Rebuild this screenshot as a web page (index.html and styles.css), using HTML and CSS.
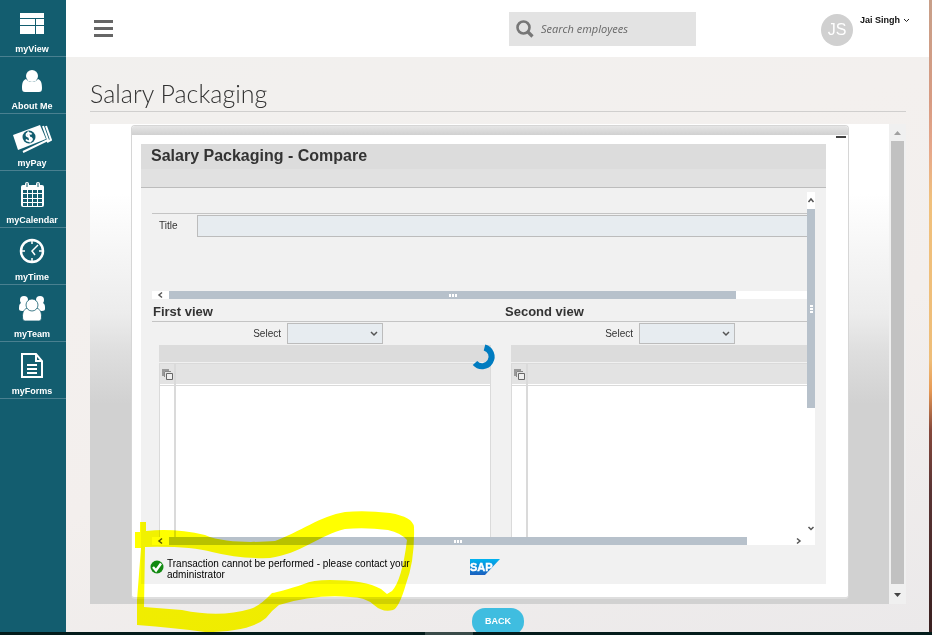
FILE: index.html
```html
<!DOCTYPE html>
<html lang="en">
<head>
<meta charset="utf-8">
<title>Salary Packaging</title>
<link rel="stylesheet" href="styles.css">
</head>
<body>
<div class="app">
  <nav class="sidebar" aria-label="Main">
    <a class="nav-item" href="#"><svg viewBox="0 0 40 32"><path fill="#fff" d="M8 6h24v5H8zM8 12h15v6H8zM24 12h8v6h-8zM8 19h15v8H8zM24 19h8v8h-8z"/></svg><span>myView</span></a>
    <a class="nav-item" href="#"><svg viewBox="0 0 40 32"><circle cx="20" cy="12" r="6" fill="#fff"/><path fill="#fff" d="M14 15c-3 1-4 4-4 9 0 3 1 4 3 4h14c2 0 3-1 3-4 0-5-1-8-4-9-3 4-9 4-12 0z"/></svg><span>About Me</span></a>
    <a class="nav-item" href="#"><svg viewBox="0 0 40 32"><path fill="#fff" d="M1 14l27-10 6 14L6 29z"/><circle cx="17" cy="16" r="6.500" fill="#135d6f"/><path fill="none" stroke="#fff" stroke-width="1.800" d="M19.500 13.500c-1-2-5-1.500-5 .5 0 2.500 5 1.500 5.500 4 0 2.500-4.500 3-6 .5M16 10.500l2.500 11"/><path fill="none" stroke="#fff" stroke-width="2" d="M31 5l5 14-25 12"/><path fill="none" stroke="#fff" stroke-width="2" d="M34 5l5 14-4 2"/></svg><span>myPay</span></a>
    <a class="nav-item" href="#"><svg viewBox="0 0 40 32"><rect x="9" y="7" width="23" height="22" rx="2" fill="#fff"/><path fill="none" stroke="#fff" stroke-width="4" stroke-linecap="round" d="M15 6v4M26 6v4"/><path stroke="#135d6f" d="M15 5v4M26 5v4"/><path fill="#135d6f" d="M11 12h4v3h-4zM16 12h4v3h-4zM21 12h4v3h-4zM26 12h4v3h-4zM11 16h4v4h-4zM16 16h4v4h-4zM21 16h4v4h-4zM26 16h4v4h-4zM11 21h4v3h-4zM16 21h4v3h-4zM21 21h4v3h-4zM26 21h4v3h-4zM11 25h4v3h-4zM16 25h4v3h-4zM21 25h4v3h-4zM26 25h4v3h-4z"/></svg><span>myCalendar</span></a>
    <a class="nav-item" href="#"><svg viewBox="0 0 40 32"><circle cx="20" cy="16" r="11" fill="none" stroke="#fff" stroke-width="2.500"/><path fill="none" stroke="#fff" stroke-width="1.500" d="M20 6v3M20 23v3M10 16h3M27 16h3M26 10l-6 6 3 4"/></svg><span>myTime</span></a>
    <a class="nav-item" href="#"><svg viewBox="0 0 40 32"><g fill="#fff"><circle cx="12" cy="8" r="4"/><circle cx="28" cy="8" r="4"/><path d="M9 11c-2 1-2 3-2 6 0 1 1 2 3 2h20c2 0 3-1 3-2 0-3 0-5-2-6z"/></g><g fill="#fff" stroke="#135d6f" stroke-width=".8"><path d="M15 16c-4 2-4.500 5-4.500 9 0 3 1 4 3 4h13c2 0 3-1 3-4 0-4-.5-7-4.500-9z"/><circle cx="20" cy="13" r="6"/></g></svg><span>myTeam</span></a>
    <a class="nav-item" href="#"><svg viewBox="0 0 40 32"><path fill="none" stroke="#fff" stroke-width="2" d="M10 5h14l6 7v16H10zM24 5v7h6"/><path stroke="#fff" stroke-width="2" d="M15 16h10M15 20h10M15 24h10"/></svg><span>myForms</span></a>
  </nav>

  <div class="page">
    <header class="topbar">
      <button class="menu" aria-label="Menu"><i></i><i></i><i></i></button>
      <label class="search">
        <svg viewBox="0 0 18 18"><circle cx="7.500" cy="7.500" r="6" fill="none" stroke="#777" stroke-width="2.600"/><path stroke="#777" stroke-width="3.200" d="M11.500 11.500l5 5"/></svg>
        <input type="search" placeholder="Search employees" aria-label="Search employees">
      </label>
      <div class="user">
        <span class="avatar">JS</span>
        <button class="user-name">Jai Singh <svg viewBox="0 0 7 5"><path fill="none" stroke="#222" d="M1 1l2.500 2.500L6 1"/></svg></button>
      </div>
    </header>

    <main class="content">
      <h1>Salary Packaging</h1>
      <div class="portal">
        <div class="stage">
          <section class="window">
            <div class="window-bar"></div>
            <button class="minimise" aria-label="Minimise"></button>
            <div class="panel">
              <h2>Salary Packaging - Compare</h2>
              <div class="toolbar"></div>
              <div class="scroller">
                <div class="scroll-main">
                  <div class="title-row">
                    <label for="title">Title</label>
                    <input id="title" type="text">
                  </div>
                  <div class="hbar hbar-top"><svg class="arrow" viewBox="0 0 17 8"><path d="M10 1.500L7 4l3 2.500"/></svg><div class="hthumb"><span class="grip"></span></div></div>
                  <div class="views">
                    <section class="view">
                      <h3>First view</h3>
                      <div class="pick"><label for="first">Select</label><select id="first"><option></option></select></div>
                      <div class="grid-caption"></div>
                      <table class="grid"><thead><tr><th class="corner"><svg viewBox="0 0 12 12"><path fill="#999" d="M0 0h7v2H2v5H0z"/><path fill="none" stroke="#888" d="M2.500 8V2.500H9"/><path fill="#eee" stroke="#666" d="M4.500 4.500h6v6h-6z"/></svg></th><th></th></tr></thead><tbody><tr><td></td><td></td></tr></tbody></table>
                    </section>
                    <section class="view view-second">
                      <h3>Second view</h3>
                      <div class="pick"><label for="second">Select</label><select id="second"><option></option></select></div>
                      <div class="grid-caption"></div>
                      <table class="grid"><thead><tr><th class="corner"><svg viewBox="0 0 12 12"><path fill="#999" d="M0 0h7v2H2v5H0z"/><path fill="none" stroke="#888" d="M2.500 8V2.500H9"/><path fill="#eee" stroke="#666" d="M4.500 4.500h6v6h-6z"/></svg></th><th></th></tr></thead><tbody><tr><td></td><td></td></tr></tbody></table>
                    </section>
                    <svg class="spinner" viewBox="0 0 26 26"><path fill="none" stroke="#007cc0" stroke-width="6" d="M13.500 3.500a9.500 9.500 0 1 1-9.500 15.500"/></svg>
                  </div>
                </div>
                <div class="vbar"><svg class="varrow" viewBox="0 0 8 17"><path d="M1.500 10L4 7l2.500 3"/></svg><div class="vthumb"><span class="grip grip-v"></span></div><svg class="varrow varrow-end" viewBox="0 0 8 17"><path d="M1.500 7L4 9.500 6.500 7"/></svg></div>
                <div class="hbar hbar-bottom"><svg class="arrow" viewBox="0 0 17 8"><path d="M10 1.500L7 4l3 2.500"/></svg><div class="hthumb"><span class="grip"></span></div><svg class="arrow arrow-end" viewBox="0 0 17 8"><path d="M7 1.500L10 4 7 6.500"/></svg></div>
              </div>
              <footer class="status">
                <svg class="ok" viewBox="0 0 14 14"><circle cx="7" cy="7" r="6.500" fill="#128a12"/><path fill="none" stroke="#fff" stroke-width="2.400" d="M3 7l3 3.500 5-7"/></svg>
                <p>Transaction cannot be performed - please contact your administrator</p>
                <svg class="sap" viewBox="0 0 30 16"><defs><linearGradient id="sapfill" x1="0" y1="0" x2="0" y2="1"><stop offset="0" stop-color="#00b4f0"/><stop offset="1" stop-color="#1a5fbe"/></linearGradient></defs><path fill="url(#sapfill)" d="M0 0h30L15 16H0z"/><text x="0" y="12">SAP</text></svg>
              </footer>
            </div>
          </section>
        </div>
        <div class="page-scroll"><svg viewBox="0 0 17 17"><path fill="#a0a0a0" d="M5 11h7L8.500 7z"/></svg><div class="page-thumb"></div><svg viewBox="0 0 17 20"><path fill="#444" d="M5 9h7l-3.500 4z"/></svg></div>
      </div>
      <button class="back">BACK</button>
    </main>
  </div>
  <div class="edge"></div>
</div>
<div class="taskbar"><span></span></div>
<svg class="highlight" viewBox="0 0 932 635" aria-hidden="true"><path fill="#ff0" fill-rule="evenodd" d="M140 522H146V531Q175 528 205 535C225 544 260 542 275 541C300 532 320 516 345 512Q365 510 390 513Q413 517 414 527Q415 560 406 584Q399 608 393 610Q383 613 374 605Q365 597 350 597Q315 594 279 605Q271 611 266 618Q250 632 205 632Q175 628 137 625V600L141 548H135V532H140ZM145 547Q190 546 212 552Q240 559 270 558C300 554 320 535 345 529Q365 527 388 530Q401 533 407 540Q402 580 392 591L387 594L381 589Q365 580 330 580Q312 580 304 584Q280 592 272 593Q260 606 250 609Q220 618 182 610L144 607Z"/></svg>
</body>
</html>
```
FILE: styles.css
```css
* { box-sizing: border-box; }

body {
  margin: 0;
  height: 100vh;
  display: flex;
  flex-direction: column;
  overflow: hidden;
  position: relative;
  font-family: "Liberation Sans", Arial, sans-serif;
  color: #333;
}

h1, h2, h3, p { margin: 0; }
button { border: 0; padding: 0; background: none; font: inherit; color: inherit; }
svg { display: block; flex: none; }

.app { flex: 1; min-height: 0; display: flex; overflow: hidden; }

/* Sidebar */
.sidebar { width: 66px; flex: none; background: #135d6f; }
.nav-item {
  height: 57px;
  display: flex;
  flex-direction: column;
  align-items: center;
  justify-content: flex-end;
  padding: 0 2px 1px 0;
  border-bottom: 1px solid #4a8090;
  color: #fff;
  font: 700 9px/12px "Liberation Sans", Arial, sans-serif;
  text-decoration: none;
}
.nav-item svg { width: 40px; height: 32px; margin-bottom: 4px; }

.page {
  flex: 1;
  min-width: 0;
  background: linear-gradient(165deg, #f1f0ee 0%, #f3f0ee 35%, #f3efed 60%, #ebe9ea 100%);
}
.edge {
  width: 3px;
  background: linear-gradient(#c79f89 0, #d79b82 100px, #e6a78a 150px, #f0c07c 200px, #eebd78 360px, #e79a55 390px, #86483c 430px, #5a3434 490px, #3a2020 100%);
}
.taskbar { height: 3px; flex: none; background: #041c1b; display: flex; justify-content: center; }
.taskbar span { width: 48px; margin-right: 34px; background: #394b49; }

/* Top bar */
.topbar {
  height: 57px;
  display: flex;
  align-items: flex-start;
  padding: 12px 19px 0 28px;
  background: #fff;
}
.menu { width: 19px; margin-top: 8px; display: flex; flex-direction: column; gap: 4px; }
.menu i { height: 3px; background: #666; }
.search {
  width: 187px;
  height: 34px;
  margin-left: auto;
  display: flex;
  align-items: center;
  gap: 7px;
  padding: 0 7px;
  background: #e3e3e3;
}
.search svg { width: 18px; height: 18px; }
.search input {
  width: 100%;
  min-width: 0;
  border: 0;
  padding: 0;
  background: none;
  font: italic 11px/16px "Open Sans", sans-serif;
  color: #666;
}
.search input::placeholder { color: #666; }
.user { display: flex; align-items: flex-start; gap: 7px; margin: 2px 0 0 125px; }
.avatar {
  width: 32px;
  height: 32px;
  border-radius: 50%;
  background: #d0d0d0;
  color: #fff;
  font-size: 16px;
  line-height: 32px;
  text-align: center;
}
.user-name { display: flex; align-items: center; gap: 3px; color: #111; font: 700 9px/12px "Liberation Sans", Arial, sans-serif; }
.user-name svg { width: 7px; height: 5px; }

/* Page content */
.content { padding: 20px 23px 0 24px; display: flex; flex-direction: column; }
h1 {
  padding-bottom: 2px;
  border-bottom: 1px solid #d0cfce;
  font: 300 25px/32px Lato, sans-serif;
  color: #333;
}
.portal { display: flex; margin-top: 12px; }
.stage {
  flex: 1;
  min-width: 0;
  padding: 1px 40px 5px 41px;
  background: linear-gradient(#fff 0, #fff 70px, #ececec 190px, #dedede 228px, #d1d1d1 280px);
}
.page-scroll { width: 17px; display: flex; flex-direction: column; background: #f0f0f0; }
.page-thumb { flex: 1; margin: 0 2px; background: #c1c1c1; }

.window {
  position: relative;
  padding-bottom: 13px;
  border: 1px solid #d6d6d6;
  border-bottom: 2px solid #dedede;
  border-radius: 4px;
  background: #fff;
}
.window-bar { height: 9px; background: linear-gradient(#e6e6e6, #d0d0d0); border-radius: 3px 3px 0 0; }
.minimise { position: absolute; top: 10px; right: 2px; width: 10px; height: 2px; background: #444; }
.panel { margin: 9px 22px 0 9px; background: #f1f1f1; }
h2 {
  padding: 0 0 2px 10px;
  background: #dcdcdc;
  font: 700 16px/23px "Liberation Sans", Arial, sans-serif;
  color: #333;
}
.toolbar { height: 19px; background: #e1e1e1; border-bottom: 1px solid #bcbcbc; }

.scroller {
  display: grid;
  grid-template-columns: 1fr 8px;
  margin: 4px 11px 0 11px;
}
.scroll-main { min-width: 0; padding-top: 21px; }
.title-row {
  display: flex;
  align-items: center;
  height: 78px;
  padding-bottom: 53px;
  border-top: 1px solid #c4c4c4;
}
.title-row label, .pick label { font-size: 10px; line-height: 12px; }
.title-row label { width: 45px; flex: none; padding-left: 7px; }
.title-row input {
  flex: 1;
  min-width: 0;
  height: 22px;
  border: 1px solid #bcbcbc;
  border-right: 0;
  background: #e7ecf0;
}

.hbar { display: flex; height: 8px; background: #fff; }
.arrow { width: 17px; height: 8px; }
.arrow path, .varrow path { fill: none; stroke: #555; stroke-width: 1.500; }
.hthumb { display: flex; align-items: center; justify-content: center; background: #b7c1cb; }
.hbar-top .hthumb { width: 567px; }
.hbar-bottom { grid-column: 1 / 3; }
.hbar-bottom .hthumb { width: 578px; }
.arrow-end { margin: 0 8px 0 auto; }
.grip { width: 8px; height: 3px; background: repeating-linear-gradient(90deg, #fff 0 2px, transparent 2px 3px); }
.vbar { display: flex; flex-direction: column; background: #fff; }
.varrow { width: 8px; height: 17px; }
.varrow-end { margin-top: auto; }
.vthumb { height: 199px; display: flex; align-items: center; justify-content: center; background: #b7c1cb; }
.grip-v { width: 3px; height: 8px; background: repeating-linear-gradient(#fff 0 2px, transparent 2px 3px); }

/* Comparison */
.views { position: relative; display: grid; grid-template-columns: 352px 1fr; }
.view h3 {
  padding: 3px 1px 0;
  border-bottom: 1px solid #c4c4c4;
  font: 700 13px/19px "Liberation Sans", Arial, sans-serif;
}
.pick {
  display: flex;
  align-items: center;
  justify-content: flex-end;
  gap: 6px;
  width: 231px;
  height: 23px;
}
.pick select {
  width: 96px;
  height: 21px;
  border: 1px solid #bcbcbc;
  border-radius: 0;
  appearance: none;
  background: #e7ecf0 url("data:image/svg+xml,%3Csvg xmlns='http://www.w3.org/2000/svg' viewBox='0 0 8 6'%3E%3Cpath d='M1 1l3 3 3-3' fill='none' stroke='%23555' stroke-width='1.500'/%3E%3C/svg%3E") no-repeat right 4px center / 8px 6px;
}
.grid-caption { height: 17px; margin: 0 13px 1px 7px; background: #dcdcdc; }
.grid {
  width: calc(100% - 20px);
  margin: 0 13px 0 7px;
  border-collapse: separate;
  border-spacing: 0;
  table-layout: fixed;
  background: #fff;
  border: 1px solid #dadada;
  border-bottom: 0;
}
.grid th { height: 22px; padding: 0; background: #e3e3e3; border-bottom: 1px solid #dadada; box-shadow: inset 0 -1px #fff; }
.grid .corner { width: 16px; }
.grid th:first-child, .grid td:first-child { border-right: 2px solid #dadada; }
.corner svg { width: 12px; height: 12px; margin-left: 2px; }
.grid td { height: 151px; padding: 0; }
.view-second .grid-caption { margin-right: 0; }
.view-second .grid { width: calc(100% - 7px); margin-right: 0; border-right: 0; }
.spinner { position: absolute; left: 319px; top: 45px; width: 26px; height: 26px; }

.status { display: flex; align-items: flex-start; height: 39px; padding: 13px 0 0 9px; color: #000; }
.ok { width: 14px; height: 14px; margin-top: 2px; }
.status p { width: 250px; margin-left: 3px; font-size: 10px; line-height: 11px; }
.sap { width: 30px; height: 16px; margin: 1px 0 0 53px; }
.sap text { fill: #fff; stroke: #fff; stroke-width: .4px; font: 700 11px "Liberation Sans", Arial, sans-serif; }

.back {
  align-self: center;
  width: 52px;
  height: 27px;
  margin-top: 4px;
  border-radius: 13px;
  background: #3fbde0;
  color: #fff;
  font: 700 9px/27px "Liberation Sans", Arial, sans-serif;
}

.highlight { position: absolute; left: 0; top: 0; width: 932px; height: 635px; mix-blend-mode: multiply; pointer-events: none; }
```
